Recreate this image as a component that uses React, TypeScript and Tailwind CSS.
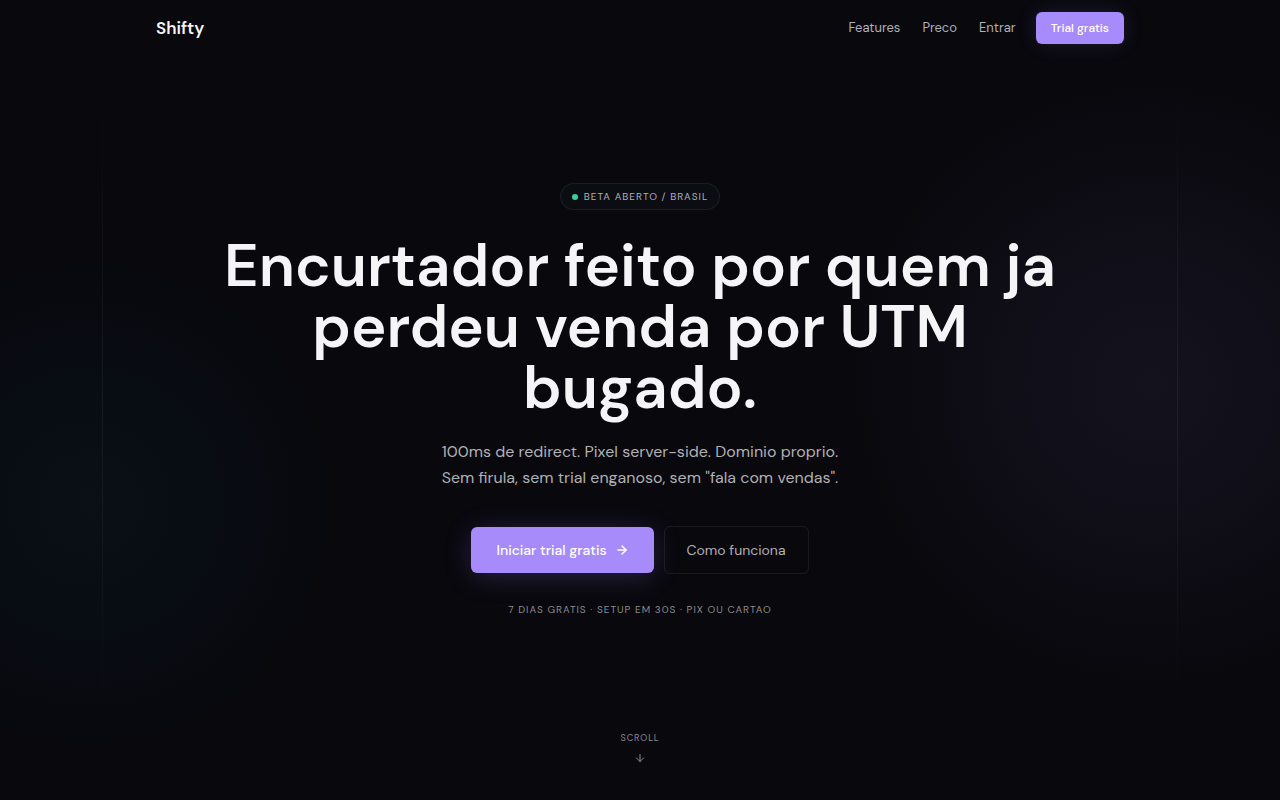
import React from "react";
import { ArrowDown, ArrowRight } from "lucide-react";

const navLinks = [
  { label: "Features", href: "#features" },
  { label: "Preco", href: "#preco" },
  { label: "Entrar", href: "#entrar" },
];

function Backdrop() {
  return (
    <div aria-hidden="true" className="pointer-events-none absolute inset-0 overflow-hidden">
      <div className="absolute inset-0 bg-[radial-gradient(circle_310px_at_90%_48%,#14121d_0%,#100e17_45%,transparent_100%)]" />
      <div className="absolute inset-0 bg-[radial-gradient(circle_250px_at_7%_63%,#0a1015_0%,#080c13_50%,transparent_100%)]" />
      <div className="absolute inset-y-[10%] left-[8%] w-px bg-linear-to-b from-transparent via-white/6 to-transparent" />
      <div className="absolute inset-y-[10%] right-[8%] w-px bg-linear-to-b from-transparent via-white/6 to-transparent" />
    </div>
  );
}

function Navigation() {
  return (
    <header className="relative mx-auto flex h-14 w-full max-w-[1016px] items-center justify-between px-6">
      <a href="#" className="text-[17px] leading-7 font-semibold text-[#f5f5f7]">
        Shifty
      </a>
      <div className="flex items-center gap-5">
        <nav className="flex items-center gap-[22px]">
          {navLinks.map((link) => (
            <a key={link.label} href={link.href} className="text-[13px] leading-5 text-[#b0b0b5] hover:text-white">
              {link.label}
            </a>
          ))}
        </nav>
        <button
          type="button"
          className="h-8 rounded-md bg-[#a78bfa] px-[15px] text-xs font-medium text-white shadow-[0_0_20px_rgba(167,139,250,0.15)]"
        >
          Trial gratis
        </button>
      </div>
    </header>
  );
}

function Hero() {
  return (
    <section className="relative flex flex-1 flex-col items-center justify-center px-6 pt-[13px] text-center">
      <div className="flex h-[27px] items-center gap-1.5 rounded-full border border-white/7 bg-[#0b0d13] px-[11px] text-[10px] tracking-widest text-[#b0b0b5]">
        <span className="size-1.5 rounded-full bg-[#34d399]" />
        BETA ABERTO / BRASIL
      </div>
      <h1 className="mt-[25px] max-w-[860px] text-[60px] leading-[61px] font-semibold text-[#f5f5f7]">
        Encurtador feito por quem ja perdeu venda por UTM bugado.
      </h1>
      <p className="mt-[21px] text-base leading-[26px] text-[#b0b0b5]">
        100ms de redirect. Pixel server-side. Dominio proprio.
        <br />
        Sem firula, sem trial enganoso, sem "fala com vendas".
      </p>
      <div className="mt-[35px] flex items-center gap-2.5">
        <button
          type="button"
          className="flex h-[46px] items-center gap-2 rounded-md bg-[#a78bfa] px-[25px] text-sm font-medium text-white shadow-[0_4px_28px_rgba(167,139,250,0.2)]"
        >
          Iniciar trial gratis
          <ArrowRight size={14} strokeWidth={2.5} />
        </button>
        <button
          type="button"
          className="h-12 rounded-md border border-white/7 px-[22px] text-sm text-[#b0b0b5]"
        >
          Como funciona
        </button>
      </div>
      <p className="mt-7 text-[10px] leading-4 tracking-widest text-[#8c8c92]">
        7 DIAS GRATIS · SETUP EM 30S · PIX OU CARTAO
      </p>
    </section>
  );
}

export default function App() {
  return (
    <div className="relative flex min-h-screen flex-col bg-[#08080d] font-['DM_Sans',Inter,sans-serif]">
      <Backdrop />
      <Navigation />
      <main className="flex flex-1 flex-col">
        <Hero />
        <a
          href="#features"
          className="relative mx-auto flex flex-col items-center gap-2 pb-9 text-[9px] leading-3 tracking-widest text-[#8c8c92]"
        >
          SCROLL
          <ArrowDown size={12} />
        </a>
      </main>
    </div>
  );
}
